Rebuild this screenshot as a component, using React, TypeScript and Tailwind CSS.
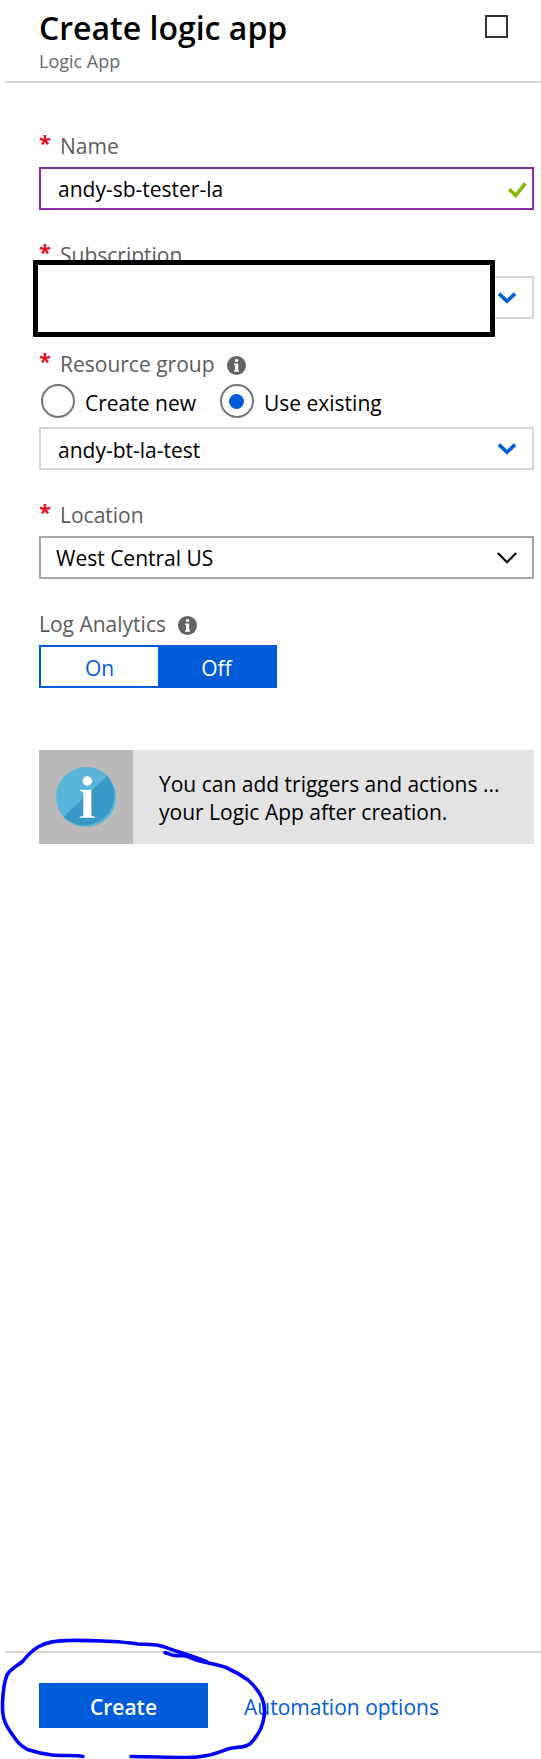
import { useState, type ReactNode } from "react";

function InfoDot() {
  return (
    <svg viewBox="0 0 19 19" className="mt-[3px] size-[19px] shrink-0" role="img" aria-label="More information">
      <circle cx="9.5" cy="9.5" r="9.5" fill="#636363" />
      <path d="M8 3.2h3.2v2.6H8zM7 7.4h4.2v6.8h.8v1.6H7v-1.6h1V9H7z" fill="#fff" />
    </svg>
  );
}

function Chevron({ bold = false }: { bold?: boolean }) {
  return (
    <svg viewBox="0 0 20 12" className="pointer-events-none absolute top-4 right-[17px] h-3 w-5" fill="none" aria-hidden="true">
      {bold ? (
        <path d="M2 1.6 10 9.2 18 1.6" stroke="#015cda" strokeWidth="3.6" />
      ) : (
        <path d="M.8 1 10 10.2 19.2 1" stroke="#000" strokeWidth="2.2" />
      )}
    </svg>
  );
}

function FieldLabel({ htmlFor, id, children }: { htmlFor?: string; id?: string; children: ReactNode }) {
  const content = (
    <>
      <span className="w-[21px] pb-2 text-[22px] font-bold text-[#e81123]" aria-hidden="true">*</span>
      {children}
    </>
  );
  const style = "flex h-7 items-center pt-px text-[21px] leading-7 text-[#5c5c5c]";
  return htmlFor ? (
    <label htmlFor={htmlFor} className={style}>{content}</label>
  ) : (
    <div id={id} className={style}>{content}</div>
  );
}

const selectBase =
  "h-[43px] w-full appearance-none rounded-none border-2 bg-white pr-12 text-[21px] leading-7 text-black outline-none";

export default function App() {
  const [name, setName] = useState("andy-sb-tester-la");
  const [groupMode, setGroupMode] = useState("existing");
  const [analytics, setAnalytics] = useState(false);

  return (
    <div className="flex min-h-screen flex-col bg-white font-['Open_Sans','Noto_Sans',sans-serif] text-black">
      <header className="ml-[5px] flex h-[83px] items-start justify-between border-b-2 border-[#d6d6d6] pr-[33px] pl-[34px]">
        <div className="pt-2">
          <h1 className="text-[32px] leading-10 font-semibold">Create logic app</h1>
          <p className="text-[18px] leading-[26px] text-[#6b6b6b]">Logic App</p>
        </div>
        <button type="button" aria-label="Maximize" className="mt-[15px] size-[23px] border-2 border-[#333]" />
      </header>

      <main className="flex flex-1 flex-col gap-[30px] pt-12 pr-[7px] pl-[39px]">
        <div className="flex flex-col gap-2">
          <FieldLabel htmlFor="name">Name</FieldLabel>
          <div className="relative">
            <input
              id="name"
              value={name}
              onChange={(e) => setName(e.target.value)}
              className="block h-[43px] w-full border-2 border-[#882ba4] pr-10 pl-[17px] text-[21px] leading-7 outline-none"
            />
            <svg viewBox="0 0 19 17" className="absolute top-[15px] right-[7px] h-[17px] w-[19px]" fill="none" aria-hidden="true">
              <path d="M1.4 7.2 7.6 13.6 17.4 1.4" stroke="#7fba00" strokeWidth="3.6" />
            </svg>
          </div>
        </div>

        <div className="relative flex flex-col gap-2">
          <FieldLabel htmlFor="subscription">Subscription</FieldLabel>
          <div className="relative">
            <select id="subscription" className={`${selectBase} block border-[#d6d6d6] pl-[17px]`} />
            <Chevron bold />
          </div>
          <div className="absolute top-5 right-[39px] -left-1.5 h-[77px] border-[5px] border-black bg-white" />
        </div>

        <div>
          <div className="flex gap-3">
            <FieldLabel id="group-label">Resource group</FieldLabel>
            <div className="pt-1"><InfoDot /></div>
          </div>
          <div role="radiogroup" aria-labelledby="group-label" className="mt-[7px] mb-[9px] flex gap-6 pl-0.5 text-[21px] leading-7">
            {[
              { value: "new", label: "Create new" },
              { value: "existing", label: "Use existing" },
            ].map((option) => (
              <label key={option.value} className="flex items-center gap-2.5">
                <input
                  type="radio"
                  name="group-mode"
                  checked={groupMode === option.value}
                  onChange={() => setGroupMode(option.value)}
                  className="grid size-[34px] appearance-none place-items-center rounded-full border-2 border-[#767676] before:size-[15px] before:rounded-full checked:before:bg-[#015cda]"
                />
                <span className="pt-1">{option.label}</span>
              </label>
            ))}
          </div>
          <div className="relative">
            <select aria-labelledby="group-label" className={`${selectBase} block border-[#d6d6d6] pt-0.5 pl-[17px]`}>
              <option>andy-bt-la-test</option>
            </select>
            <Chevron bold />
          </div>
        </div>

        <div className="flex flex-col gap-2">
          <FieldLabel htmlFor="location">Location</FieldLabel>
          <div className="relative">
            <select id="location" className={`${selectBase} block border-[#a6a6a6] pl-[15px]`}>
              <option>West Central US</option>
            </select>
            <Chevron />
          </div>
        </div>

        <div className="flex flex-col gap-2">
          <div className="flex h-7 items-center gap-3 pt-0.5 text-[21px] leading-7 text-[#5c5c5c]">
            <span id="analytics-label">Log Analytics</span>
            <InfoDot />
          </div>
          <div role="group" aria-labelledby="analytics-label" className="grid h-[43px] w-[238px] grid-cols-2 border-2 border-[#015cda] text-[21px] leading-7">
            <button
              type="button"
              aria-pressed={analytics}
              onClick={() => setAnalytics(true)}
              className={analytics ? "bg-[#015cda] pt-0.5 text-white" : "bg-white pt-0.5 text-[#015cda]"}
            >
              On
            </button>
            <button
              type="button"
              aria-pressed={!analytics}
              onClick={() => setAnalytics(false)}
              className={analytics ? "bg-white pt-0.5 text-[#015cda]" : "bg-[#015cda] pt-0.5 text-white"}
            >
              Off
            </button>
          </div>
        </div>

        <div className="mt-8 flex h-[94px] bg-[#e3e3e3]">
          <div className="grid w-[94px] shrink-0 place-items-center bg-[#bababa]">
            <svg viewBox="0 0 60 60" className="size-[60px]" aria-hidden="true">
              <circle cx="30" cy="30" r="30" fill="#59b4d9" />
              <path d="M51.2 8.8A30 30 0 0 1 7.5 49.8Z" fill="#3999c6" />
              <circle cx="31.3" cy="14" r="4.7" fill="#fff" />
              <path d="M24 22.8h11.4v24.6c0 1.6 1 2 3.6 2.4v1H23.7v-1c2.6-.4 3.6-.8 3.6-2.4V26.5c0-1.6-.8-2.2-3.3-2.5z" fill="#fff" />
            </svg>
          </div>
          <p className="self-center pt-0.5 pl-[26px] text-[21px] leading-7">
            You can add triggers and actions ...
            <br />
            your Logic App after creation.
          </p>
        </div>
      </main>

      <footer className="relative">
        <div className="ml-[5px] flex items-center gap-9 border-t-2 border-[#d6d6d6] pt-[30px] pb-[31px] pl-[34px] text-[21px] leading-7">
          <button type="button" className="h-[45px] w-[169px] bg-[#015cda] pt-0.5 font-semibold text-white">Create</button>
          <a href="#automation" className="pt-0.5 text-[#015cda]">Automation options</a>
        </div>
        <svg viewBox="0 0 280 139" className="pointer-events-none absolute bottom-0 left-0 h-[139px] w-[280px]" fill="none" stroke="#00f" strokeWidth="3.6" strokeLinecap="round" strokeLinejoin="round" aria-hidden="true">
          <path d="M83 136.5C75 135 63 136 52 135C43 134 35 132 27.5 129.5C23 127 20 125 17 121C12 114 7 108 5 102C2 95 2.5 90 2.5 83C3 72 4 62 7 55C11 48 17 46 22.5 41.5C27 36 31 31 38 27C48 21 58 21 69 20.5C85 20 99 21 114 21.5C122 22 130 23 138 24C145 24.5 152 24 159 25.5C166 27 172 30 179 32C188 35 198 38 207 42" />
          <path d="M165 32.5C168 33.5 171 35 174 35.5C178 36 182 35 186 36C192 38 198 41 204 42C212 44 219 45 226 47.5C234 51 241 55 248 60C255 66 259 72 262 78C264 83 265 91 264 97C263 103 261 110 257 115C254 120 251 124 247 125.5C241 128 235 127 229.5 128.5C222 131 215 134 207 135.5C200 137 193 137.5 186 137.5C168 137.5 149 136.5 131 136.5" />
        </svg>
      </footer>
    </div>
  );
}
